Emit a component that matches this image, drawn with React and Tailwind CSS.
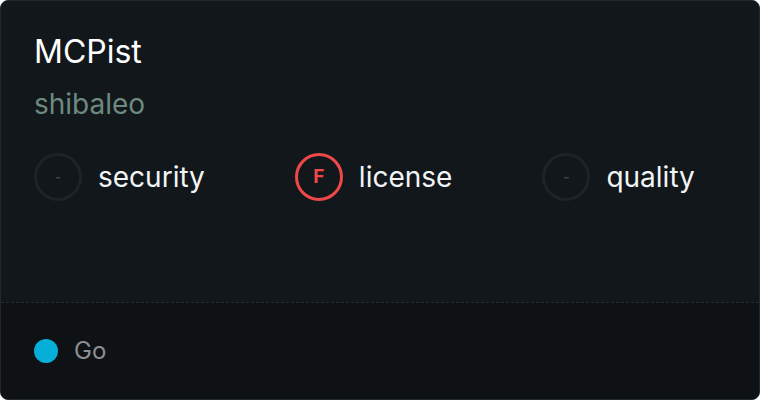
import React from 'react';

const scores = [
  { label: 'security', grade: '-' },
  { label: 'license', grade: 'F' },
  { label: 'quality', grade: '-' },
];

const ScoreBadge = ({ grade }) => {
  if (grade === '-') {
    return (
      <div className="w-12 h-12 rounded-full border-[3px] border-[#1e2426] flex items-center justify-center">
        <span className="text-[#3b4245] text-sm font-semibold">-</span>
      </div>
    );
  }
  return (
    <div className="w-12 h-12 rounded-full border-[3px] border-[#f04848] flex items-center justify-center">
      <span className="text-[#f04848] text-[19px] font-bold">{grade}</span>
    </div>
  );
};

const App = () => {
  return (
    <div className="w-[760px] h-[400px] bg-white" style={{ fontFamily: 'Inter, "Noto Sans", sans-serif' }}>
      <div className="w-full h-full rounded-lg border border-[#22292c] overflow-hidden flex flex-col bg-[#11171a]">
        <div className="flex-1 px-[33px] pt-[32px]">
          <h1 className="text-[32px] leading-[38px] text-white">MCPist</h1>
          <p className="mt-[16px] text-[28px] leading-[34px] text-[#6d8a80]">shibaleo</p>
          <div className="mt-[32px] flex items-center gap-[90px]">
            {scores.map((s) => (
              <div key={s.label} className="flex items-center gap-4">
                <ScoreBadge grade={s.grade} />
                <span className="text-[28px] leading-[34px] text-[#f2f4f5]">{s.label}</span>
              </div>
            ))}
          </div>
        </div>
        <div className="h-[97px] border-t border-dashed border-[#272e31] bg-[#0e1215] px-[33px] flex items-center gap-4">
          <span className="w-6 h-6 rounded-full bg-[#06afd8]" />
          <span className="text-[24px] text-[#8b8f91]">Go</span>
        </div>
      </div>
    </div>
  );
};

export default App;
